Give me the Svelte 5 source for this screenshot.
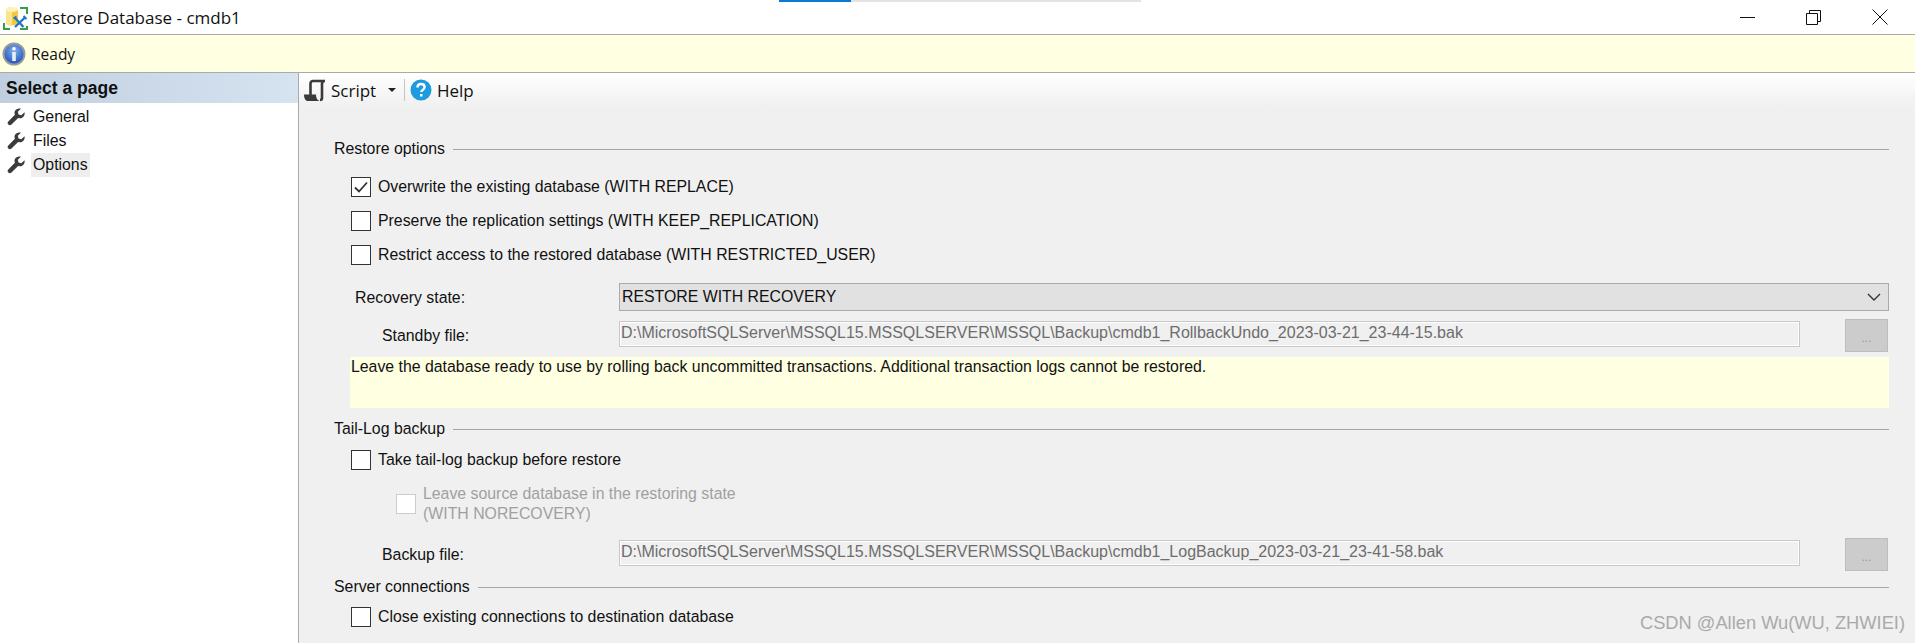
<script>
  const pages = ["General", "Files", "Options"];
  const restoreChecks = [
    { label: "Overwrite the existing database (WITH REPLACE)", checked: true },
    { label: "Preserve the replication settings (WITH KEEP_REPLICATION)", checked: false },
    { label: "Restrict access to the restored database (WITH RESTRICTED_USER)", checked: false },
  ];
</script>

{#snippet wrench()}
  <svg class="wrench" width="19" height="19" viewBox="0 0 19 19">
    <path d="M17.500 4.200l-3.200 3-2.800-.7-.7-2.700 3.100-3.100c-2.400-.8-5 .1-6 2.200-.6 1.300-.5 2.700 0 3.800l-6.600 6.700c-.9.900-.9 2.300 0 3.200.9.900 2.300.9 3.200 0l6.600-6.700c1.200.6 2.700.6 4-.1 2-1.100 3-3.400 2.400-5.600z" fill="#3c3c3c" />
  </svg>
{/snippet}

{#snippet checkbox(checked, disabled)}
  <span class="box" class:disabled>
    {#if checked}
      <svg width="18" height="18" viewBox="0 0 18 18"><path d="M3 9.500l4 4 8-9" fill="none" stroke="#333" stroke-width="1.800" /></svg>
    {/if}
  </span>
{/snippet}

<div class="window">
  <div class="progress"><span></span></div>
  <header class="titlebar">
    <svg class="appicon" width="26" height="26" viewBox="0 0 26 26">
      <path d="M17 4h7v6M1 19v6h6M17 25h7v-3" fill="none" stroke="#3a9d4a" stroke-width="2" />
      <path d="M3 6c0-3 12-3 12 0v13c0 3-12 3-12 0z" fill="#f3c93c" />
      <path d="M3 6c0-3 5-3 6-3v19c-2 0-6-.5-6-3z" fill="#fbe58c" />
      <ellipse cx="9" cy="5.500" rx="6" ry="2.500" fill="#fff2b8" />
      <path d="M11.500 13.500l9 9.500M22 13.500l-10 9.500" stroke="#1f78c4" stroke-width="2.400" />
      <path d="M10.500 14.500l3-2M23.500 15l-3-3" stroke="#1f78c4" stroke-width="2" />
    </svg>
    <span class="title">Restore Database - cmdb1</span>
    <div class="winbtns">
      <svg width="16" height="16" viewBox="0 0 16 16"><path d="M0 8.500h15" stroke="#111" /></svg>
      <svg width="16" height="16" viewBox="0 0 16 16"><path d="M.5 4.500h11v11H.5zM3.500 4.500v-3h11v11h-3" fill="none" stroke="#111" /></svg>
      <svg width="16" height="16" viewBox="0 0 16 16"><path d="M.5.500l15 15M15.500.500l-15 15" stroke="#111" /></svg>
    </div>
  </header>

  <div class="status">
    <svg width="24" height="24" viewBox="0 0 24 24">
      <defs>
        <radialGradient id="infoblue" cx="50%" cy="35%" r="65%">
          <stop offset="0" stop-color="#7fb2f0" />
          <stop offset="1" stop-color="#1c4fb8" />
        </radialGradient>
      </defs>
      <circle cx="12" cy="12" r="10.500" fill="url(#infoblue)" stroke="#9a9a9a" stroke-width="2" />
      <circle cx="12" cy="6.800" r="1.800" fill="#fff" />
      <rect x="10.200" y="10" width="3.600" height="9" fill="#e8eefb" />
    </svg>
    <span>Ready</span>
  </div>

  <div class="body">
    <aside class="sidebar">
      <div class="sidehead">Select a page</div>
      <ul>
        {#each pages as page}
          <li>
            {@render wrench()}
            <span class:selected={page === "Options"}>{page}</span>
          </li>
        {/each}
      </ul>
    </aside>

    <main class="content">
      <div class="toolbar">
        <svg width="23" height="23" viewBox="0 0 23 23">
          <path d="M7.500 17V4.500c0-1.500 1-2.500 2.500-2.500h12M22 2c-2 0-3 1-3 2.500V19c0 1.200-.6 2-2 2" fill="none" stroke="#3a3a3a" stroke-width="2.600" />
          <path d="M1 15.500h12c0 3 .8 5.500 3.500 6.500H5c-2.500 0-4-2.500-4-6.500z" fill="#3a3a3a" />
        </svg>
        <span class="tool script">Script</span>
        <span class="caret"></span>
        <span class="sep"></span>
        <svg width="22" height="22" viewBox="0 0 22 22">
          <circle cx="11" cy="11" r="10.500" fill="#1e9be0" />
          <path d="M7.500 8.500c0-2.200 1.600-3.500 3.600-3.500s3.500 1.200 3.500 3.100c0 2.800-3.300 2.700-3.300 5" fill="none" stroke="#fff" stroke-width="2.400" />
          <rect x="10" y="15" width="2.500" height="2.500" fill="#fff" />
        </svg>
        <span class="tool">Help</span>
      </div>

      <div class="form">
        <div class="legend first"><span>Restore options</span><i></i></div>
        <div class="checks">
          {#each restoreChecks as item}
            <div class="check">
              {@render checkbox(item.checked, false)}
              <span>{item.label}</span>
            </div>
          {/each}
        </div>

        <div class="field recovery">
          <label class="lbl rec" for="recovery">Recovery state:</label>
          <div class="select" id="recovery">
            <span>RESTORE WITH RECOVERY</span>
            <svg width="14" height="8" viewBox="0 0 14 8"><path d="M1 1l6 6 6-6" fill="none" stroke="#333" stroke-width="1.400" /></svg>
          </div>
        </div>

        <div class="field file">
          <span class="lbl">Standby file:</span>
          <div class="input">D:\MicrosoftSQLServer\MSSQL15.MSSQLSERVER\MSSQL\Backup\cmdb1_RollbackUndo_2023-03-21_23-44-15.bak</div>
          <div class="dots">...</div>
        </div>

        <div class="note">Leave the database ready to use by rolling back uncommitted transactions. Additional transaction logs cannot be restored.</div>

        <div class="legend tail"><span>Tail-Log backup</span><i></i></div>
        <div class="check single">
          {@render checkbox(false, false)}
          <span>Take tail-log backup before restore</span>
        </div>
        <div class="check nested">
          {@render checkbox(false, true)}
          <span>Leave source database in the restoring state<br />(WITH NORECOVERY)</span>
        </div>

        <div class="field file backup">
          <span class="lbl">Backup file:</span>
          <div class="input">D:\MicrosoftSQLServer\MSSQL15.MSSQLSERVER\MSSQL\Backup\cmdb1_LogBackup_2023-03-21_23-41-58.bak</div>
          <div class="dots">...</div>
        </div>

        <div class="legend server"><span>Server connections</span><i></i></div>
        <div class="check single close">
          {@render checkbox(false, false)}
          <span>Close existing connections to destination database</span>
        </div>
      </div>
      <div class="watermark">CSDN @Allen Wu(WU, ZHWIEI)</div>
    </main>
  </div>
</div>

<style>
  :global(body) {
    margin: 0;
    overflow: hidden;
    background: #f0f0f0;
  }

  .window {
    position: relative;
    width: 1915px;
    height: 643px;
    display: flex;
    flex-direction: column;
    font-family: "Liberation Sans", Arial, sans-serif;
    font-size: 15.850px;
    color: #111;
  }

  .progress {
    position: absolute;
    left: 779px;
    top: 0;
    width: 362px;
    height: 2px;
    background: #e3e3e3;
  }

  .progress span {
    display: block;
    width: 72px;
    height: 2px;
    background: #0a78d7;
  }

  .titlebar {
    height: 34px;
    background: #fff;
    border-bottom: 1px solid #aaa;
    display: flex;
    align-items: center;
    padding-left: 3px;
    flex-shrink: 0;
  }

  .title {
    margin-left: 3px;
    font-family: "Open Sans", sans-serif;
    font-size: 17px;
  }

  .winbtns {
    margin-left: auto;
    margin-right: 27px;
    display: flex;
    gap: 50px;
  }

  .status {
    height: 37px;
    background: #ffffe1;
    border-bottom: 1px solid #aaa;
    display: flex;
    align-items: center;
    gap: 5px;
    padding-left: 2px;
    flex-shrink: 0;
  }

  .status span {
    font-family: "Open Sans", sans-serif;
    font-size: 15.500px;
  }

  .body {
    flex: 1;
    display: flex;
    min-height: 0;
  }

  .sidebar {
    width: 298px;
    background: #fff;
    border-right: 1px solid #aaa;
    flex-shrink: 0;
  }

  .sidehead {
    height: 30px;
    line-height: 30px;
    padding-left: 6px;
    font-size: 17.500px;
    font-weight: bold;
    background: linear-gradient(to right, #c0cfdf, #d6e3f1);
  }

  .sidebar ul {
    list-style: none;
    margin: 0;
    padding: 2px 0 0 7px;
  }

  .sidebar li {
    height: 24px;
    display: flex;
    align-items: center;
    gap: 5px;
  }

  .sidebar li span {
    padding: 0 2px;
    height: 24px;
    line-height: 24px;
  }

  .sidebar li .selected {
    background: #eee;
  }

  .content {
    flex: 1;
    min-width: 0;
  }

  .toolbar {
    height: 34px;
    display: flex;
    align-items: center;
    padding-left: 4px;
    background: linear-gradient(to bottom, #fff, #f0f0f0);
  }

  .tool {
    font-family: "Open Sans", sans-serif;
    font-size: 17px;
    margin-left: 5px;
  }

  .script {
    width: 57px;
  }

  .caret {
    border-left: 4px solid transparent;
    border-right: 4px solid transparent;
    border-top: 4px solid #222;
  }

  .sep {
    width: 1px;
    height: 22px;
    background: #c4c4c4;
    margin: 0 5px 0 8px;
  }

  .form {
    padding: 0 26px 0 35px;
  }

  .legend {
    display: flex;
    align-items: center;
    gap: 8px;
    height: 20px;
  }

  .legend i {
    flex: 1;
    height: 1px;
    background: #a5a5a5;
  }

  .legend.first {
    margin-top: 32px;
  }

  .checks {
    margin-top: 18px;
    display: flex;
    flex-direction: column;
    gap: 14px;
    padding-left: 17px;
  }

  .check {
    display: flex;
    align-items: center;
    gap: 7px;
    height: 20px;
  }

  .box {
    width: 18px;
    height: 18px;
    border: 1px solid #333;
    background: #fff;
    display: block;
    flex-shrink: 0;
  }

  .box svg {
    display: block;
  }

  .box.disabled {
    border-color: #ccc;
  }

  .field {
    display: flex;
    align-items: center;
  }

  .lbl {
    box-sizing: border-box;
    flex-shrink: 0;
    width: 285px;
    padding-left: 48px;
  }

  .lbl.rec {
    padding: 2px 0 0 21px;
  }

  .recovery {
    margin-top: 18px;
  }

  .select {
    flex: 1;
    height: 28px;
    box-sizing: border-box;
    border: 1px solid #aaa;
    background: #e1e1e1;
    display: flex;
    align-items: center;
    justify-content: space-between;
    padding: 0 7px 0 2px;
  }

  .file {
    margin-top: 8px;
    height: 33px;
  }

  .input {
    width: 1181px;
    height: 26px;
    flex-shrink: 0;
    box-sizing: border-box;
    margin-bottom: 3px;
    border: 1px solid #c8c8c8;
    box-shadow: inset 0 0 0 1px #fff;
    background: #f0f0f0;
    color: #6d6d6d;
    font-size: 16px;
    line-height: 22px;
    padding-left: 1px;
    white-space: nowrap;
    overflow: hidden;
  }

  .dots {
    width: 43px;
    height: 33px;
    flex-shrink: 0;
    box-sizing: border-box;
    margin-left: 45px;
    border: 1px solid #bdbdbd;
    background: #cccccc;
    color: #999;
    font-size: 12px;
    text-align: center;
    line-height: 36px;
  }

  .note {
    margin: 5px 0 0 16px;
    height: 51px;
    padding: 1px 0 0 1px;
    box-sizing: border-box;
    background: #ffffe1;
    line-height: 18px;
  }

  .legend.tail {
    margin-top: 11px;
  }

  .single {
    margin-left: 17px;
  }

  .legend.tail + .single {
    margin-top: 11px;
  }

  .nested {
    margin: 14px 0 0 62px;
    height: 40px;
    line-height: 20px;
    color: #a0a0a0;
  }

  .backup {
    margin-top: 14px;
  }

  .legend.server {
    margin-top: 6px;
  }

  .close {
    margin-top: 10px;
  }

  .watermark {
    position: absolute;
    right: 10px;
    bottom: 9px;
    font-size: 18.300px;
    color: #aaa;
  }
</style>
